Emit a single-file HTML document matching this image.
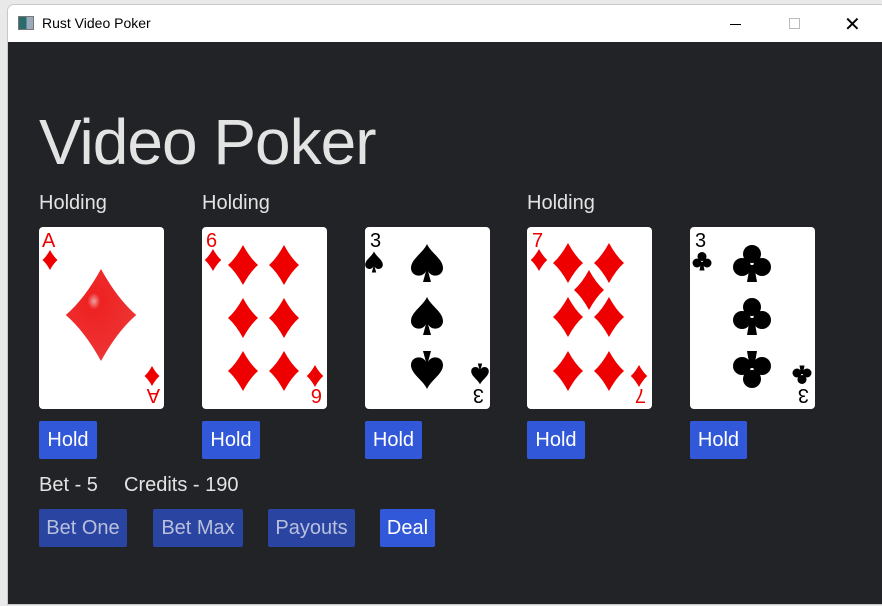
<!DOCTYPE html>
<html><head><meta charset="utf-8"><style>
*{margin:0;padding:0;box-sizing:border-box}
body{width:882px;height:606px;background:#e9e9e9;position:relative;overflow:hidden;font-family:"Liberation Sans",sans-serif}
.win{position:absolute;left:7px;top:4px;width:880px;height:601px;background:#fff;border:1px solid #c8c8c8;border-radius:7px 7px 0 0;overflow:hidden}
.tb{position:absolute;left:0;top:0;width:100%;height:37px;background:#fff}
.tb .t{position:absolute;left:34px;top:10px;font-size:14px;color:#000}
.ic{position:absolute;left:10px;top:11px;width:16px;height:14px;border:1px solid #777;background:linear-gradient(90deg,#2b6b6b 0 55%,#9ab 55%)}
.content{position:absolute;left:0;top:37px;width:100%;height:564px;background:#222327}
.a{position:absolute;color:#e3e3e3}
.h1{left:31px;top:63px;font-size:64px;letter-spacing:-1px}
.hold{font-size:20px;top:150px}
.card{position:absolute;top:185px;width:125px;height:182px;background:#fff;border-radius:4px}
.btn{position:absolute;height:38px;border-radius:2px;font-size:20px;line-height:38px;text-align:center}
.b1{background:#3158d8;color:#fff}
.b2{background:#2a44a2;color:#b9c0dc}
</style></head><body>
<div class="win">
<div class="tb"><div class="ic"></div><div class="t">Rust Video Poker</div>
<div style="position:absolute;left:722px;top:19px;width:11px;height:1px;background:#000"></div>
<div style="position:absolute;left:781px;top:13px;width:11px;height:11px;border:1px solid #bbb"></div>
<div style="position:absolute;left:836px;top:7px;font-size:20px;color:#000">✕</div>
</div>
<div class="content">
<div class="a h1">Video Poker</div>
<div class="a hold" style="left:31px">Holding</div>
<div class="a hold" style="left:194px">Holding</div>
<div class="a hold" style="left:519px">Holding</div>
<svg width="0" height="0" style="position:absolute"><defs>
<path id="d" d="M0,-20 Q7,-7 15,0 Q7,7 0,20 Q-7,7 -15,0 Q-7,-7 0,-20Z"/>
<path id="s" d="M0,-19 C4,-10 16,-4 16,5 C16,11 10,14 5,12 C3,11 2,10 1,8 L4,19 L-4,19 L-1,8 C-2,10 -3,11 -5,12 C-10,14 -16,11 -16,5 C-16,-4 -4,-10 0,-19Z"/>
<g id="c"><circle cx="0" cy="-9" r="9"/><circle cx="-10" cy="4" r="9"/><circle cx="10" cy="4" r="9"/><path d="M-2,2 L2,2 L5,19 L-5,19Z"/></g>
<radialGradient id="g" cx="0.4" cy="0.35" r="0.6"><stop offset="0" stop-color="#f0a0a0"/><stop offset="0.15" stop-color="#e22"/><stop offset="1" stop-color="#e33"/></radialGradient>
</defs></svg>
<div class="card" style="left:31px"><svg width="125" height="182" font-family="Liberation Sans">
<text x="3" y="20" font-size="20" fill="#e00">A</text><use href="#d" transform="translate(11,33) scale(0.5)" fill="#e00"/>
<path d="M0,-20 Q7,-7 15,0 Q7,7 0,20 Q-7,7 -15,0 Q-7,-7 0,-20Z" transform="translate(62,88) scale(2.35,2.3)" fill="url(#g)"/>
<g transform="rotate(180 62 91)"><text x="3" y="20" font-size="20" fill="#e00">A</text><use href="#d" transform="translate(11,33) scale(0.5)" fill="#e00"/></g>
</svg></div>
<div class="card" style="left:194px"><svg width="125" height="182" font-family="Liberation Sans" fill="#e00">
<text x="4" y="20" font-size="20">6</text><use href="#d" transform="translate(11,33) scale(0.55)"/>
<use href="#d" x="41" y="38"/><use href="#d" x="82" y="38"/><use href="#d" x="41" y="91"/><use href="#d" x="82" y="91"/><use href="#d" x="41" y="144"/><use href="#d" x="82" y="144"/>
<g transform="rotate(180 62 91)"><text x="4" y="20" font-size="20">6</text><use href="#d" transform="translate(11,33) scale(0.55)"/></g>
</svg></div>
<div class="card" style="left:357px"><svg width="125" height="182" font-family="Liberation Sans" fill="#000">
<text x="5" y="20" font-size="20">3</text><use href="#s" transform="translate(9,35) scale(0.55)"/>
<use href="#s" x="62" y="36"/><use href="#s" x="62" y="89"/><use href="#s" transform="translate(62,143) rotate(180)"/>
<g transform="rotate(180 62 91)"><text x="5" y="20" font-size="20">3</text><use href="#s" transform="translate(9,35) scale(0.55)"/></g>
</svg></div>
<div class="card" style="left:519px"><svg width="125" height="182" font-family="Liberation Sans" fill="#e00">
<text x="5" y="20" font-size="20">7</text><use href="#d" transform="translate(12,33) scale(0.55)"/>
<use href="#d" x="41" y="36"/><use href="#d" x="82" y="36"/><use href="#d" x="62" y="63"/><use href="#d" x="41" y="90"/><use href="#d" x="82" y="90"/><use href="#d" x="41" y="144"/><use href="#d" x="82" y="144"/>
<g transform="rotate(180 62 91)"><text x="5" y="20" font-size="20">7</text><use href="#d" transform="translate(12,33) scale(0.55)"/></g>
</svg></div>
<div class="card" style="left:682px"><svg width="125" height="182" font-family="Liberation Sans" fill="#000">
<text x="5" y="20" font-size="20">3</text><use href="#c" transform="translate(12,34) scale(0.5)"/>
<use href="#c" x="62" y="36"/><use href="#c" x="62" y="89"/><use href="#c" transform="translate(62,143) rotate(180)"/>
<g transform="rotate(180 62 91)"><text x="5" y="20" font-size="20">3</text><use href="#c" transform="translate(12,34) scale(0.5)"/></g>
</svg></div>
<div class="btn b1" style="left:31px;top:379px;width:58px">Hold</div>
<div class="btn b1" style="left:194px;top:379px;width:58px">Hold</div>
<div class="btn b1" style="left:357px;top:379px;width:57px">Hold</div>
<div class="btn b1" style="left:519px;top:379px;width:58px">Hold</div>
<div class="btn b1" style="left:682px;top:379px;width:57px">Hold</div>
<div class="a" style="left:31px;top:432px;font-size:20px">Bet - 5</div>
<div class="a" style="left:116px;top:432px;font-size:20px">Credits - 190</div>
<div class="btn b2" style="left:31px;top:467px;width:88px">Bet One</div>
<div class="btn b2" style="left:145px;top:467px;width:90px">Bet Max</div>
<div class="btn b2" style="left:260px;top:467px;width:87px">Payouts</div>
<div class="btn b1" style="left:372px;top:467px;width:55px">Deal</div>
</div></div>
</body></html>
